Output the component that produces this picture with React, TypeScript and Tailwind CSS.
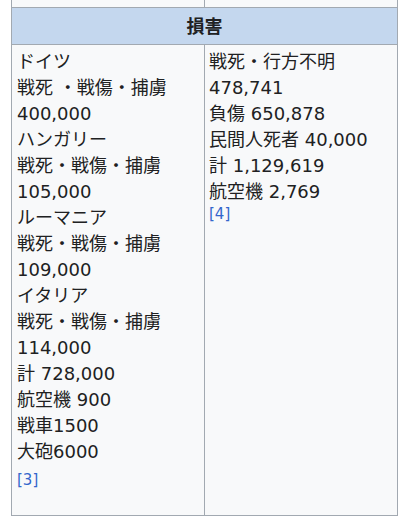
const fontStack = "font-['DejaVu_Sans','Noto_Sans_CJK_JP',sans-serif]";

const left: string[] = [
  "ドイツ",
  "戦死 ・戦傷・捕虜",
  "400,000",
  "ハンガリー",
  "戦死・戦傷・捕虜",
  "105,000",
  "ルーマニア",
  "戦死・戦傷・捕虜",
  "109,000",
  "イタリア",
  "戦死・戦傷・捕虜",
  "114,000",
  "計 728,000",
  "航空機 900",
  "戦車1500",
  "大砲6000",
];

const right: string[] = [
  "戦死・行方不明",
  "478,741",
  "負傷 650,878",
  "民間人死者 40,000",
  "計 1,129,619",
  "航空機 2,769",
];

/* Footnote marker — Wikipedia-style blue reference link. */
function Ref({ n, className = "" }: { n: number; className?: string }) {
  return (
    <div className={`text-[15px] leading-[18px] text-[#3366cc] ${className}`}>
      [{n}]
    </div>
  );
}

export default function App() {
  return (
    <div
      className={`h-[517px] w-[405px] bg-white pl-[11px] text-[#202122] ${fontStack}`}
    >
      <div className="w-[387px] border-x border-[#a2a9b1] bg-[#f8f9fa]">
        {/* tail of the previous row, cut off at the top */}
        <div className="grid h-[8px] grid-cols-[193px_1fr] border-b border-[#a2a9b1]">
          <div className="border-r border-[#a2a9b1]" />
          <div />
        </div>

        <div className="flex h-[37px] items-center justify-center border-b border-[#a2a9b1] bg-[#c4d7ee] text-[18px] font-bold">
          損害
        </div>

        <div className="grid h-[471px] grid-cols-[193px_1fr] border-b border-[#a2a9b1] text-[18px] leading-[26px]">
          <div className="border-r border-[#a2a9b1] pl-[5px] pt-[4px]">
            {left.map((t, i) => (
              <div key={i}>{t}</div>
            ))}
            <Ref n={3} className="mt-[6px]" />
          </div>
          <div className="pl-[4px] pt-[4px]">
            {right.map((t, i) => (
              <div key={i}>{t}</div>
            ))}
            <Ref n={4} />
          </div>
        </div>
      </div>
    </div>
  );
}
